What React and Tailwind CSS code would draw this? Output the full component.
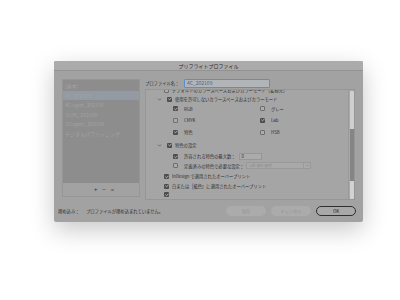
import { Check, ChevronDown } from 'lucide-react';

const FONT = { fontFamily: '"Noto Sans CJK JP", "Noto Sans", sans-serif' };

function Box({ on }) {
  return on ? (
    <span className="w-[5px] h-[5px] rounded-[1px] bg-[#4d4d4d] flex items-center justify-center shrink-0">
      <Check className="w-[4px] h-[4px] text-[#cfcfcf]" strokeWidth={5} />
    </span>
  ) : (
    <span className="w-[5px] h-[5px] rounded-[1px] border-[0.6px] border-[#6e6e6e] bg-[#acacac] shrink-0" />
  );
}

function Row({ h, indent, chevron, on, label, children }) {
  return (
    <div className={`flex items-center ${h}`}>
      <div className={`${indent} flex items-center gap-[3px]`}>
        {chevron && <ChevronDown className="w-[5px] h-[5px] text-[#4a4a4a] -ml-[7px] mr-[2px]" strokeWidth={3} />}
        <Box on={on} />
        <span className="text-[4.3px] text-[#2e2e2e] whitespace-nowrap">{label}</span>
      </div>
      {children}
    </div>
  );
}

function Pair({ h, a, b }) {
  return (
    <div className={`flex items-center ${h}`}>
      <div className="w-[110px] pl-[27px] flex items-center gap-[6px]">
        <Box on={a.on} />
        <span className="text-[4.3px] text-[#2e2e2e]">{a.label}</span>
      </div>
      <div className="pl-[4px] flex items-center gap-[6px]">
        <Box on={b.on} />
        <span className="text-[4.3px] text-[#2e2e2e]">{b.label}</span>
      </div>
    </div>
  );
}

const profiles = ['[基本]', '4C_202109', '4C+spot_202109', '1C(K)_202109', '1C(spot)_202109', 'デジタルパブリッシング'];

export default function App() {
  return (
    <div className="w-[400px] h-[300px] bg-white pt-[61px] pl-[54px]" style={FONT}>
      <div className="w-[309px] h-[161px] bg-[#a2a2a2] rounded-[2px] shadow-[0_8px_24px_rgba(0,0,0,0.22)] flex flex-col overflow-hidden">
        {/* title */}
        <div className="h-[10px] bg-[#ababab] border-b border-[#929292] flex items-center justify-center">
          <span className="text-[5px] text-[#2a2a2a]">プリフライトプロファイル</span>
        </div>

        <div className="flex pl-[8px] pt-[7px] gap-[5px]">
          {/* profile list */}
          <div className="w-[78px] h-[118px] mt-[1px] border border-[#969696] flex flex-col">
            <div className="h-[103px] bg-[#8d8d8d] pt-[1px] flex flex-col">
              {profiles.map((p, i) => (
                <div
                  key={p}
                  className={`h-[9.5px] pl-[2px] flex items-center text-[5px] text-[#a3a3a3] ${i === 1 ? 'bg-[#939aa3]' : ''}`}
                >
                  {p}
                </div>
              ))}
            </div>
            <div className="flex-1 flex items-center justify-center gap-[5px] pl-[6px] text-[6px] text-[#333] leading-none">
              <span>+</span>
              <span>−</span>
              <span className="text-[#555]">=</span>
            </div>
          </div>

          {/* right side */}
          <div className="w-[210px] flex flex-col">
            <div className="h-[10px] flex items-center">
              <span className="w-[39px] text-[4.3px] text-[#2e2e2e]">プロファイル名：</span>
              <div className="w-[86px] h-[9px] bg-[#b2b5b8] border border-[#5b8fc8] rounded-[1px] flex items-center pl-[2px] text-[5px] text-[#3d5f8c]">
                4C_202109
              </div>
            </div>

            <div className="mt-[1px] h-[111px] border border-[#969696] bg-[#a5a5a5] flex overflow-hidden">
              <div className="flex-1 flex flex-col -mt-[4px]">
                <Row h="h-[9px]" indent="pl-[18px]" on={false} label="デフォルトのカラースペースおよびカラーモード（変換先）" />
                <Row h="h-[10px]" indent="pl-[18px]" chevron on label="使用を許可しないカラースペースおよびカラーモード" />
                <Pair h="h-[11px]" a={{ on: true, label: 'RGB' }} b={{ on: false, label: 'グレー' }} />
                <Pair h="h-[13px]" a={{ on: false, label: 'CMYK' }} b={{ on: true, label: 'Lab' }} />
                <Pair h="h-[13px]" a={{ on: true, label: '特色' }} b={{ on: false, label: 'HSB' }} />
                <Row h="h-[15px]" indent="pl-[18px]" chevron on label="特色の設定" />
                <Row h="h-[9px]" indent="pl-[27px] gap-[6px]" on label="許容される特色の最大数：">
                  <div className="ml-[3px] w-[23px] h-[7px] bg-[#ababab] border border-[#969696] flex items-center pl-[2px] text-[4.3px] text-[#2e2e2e]">
                    0
                  </div>
                </Row>
                <Row h="h-[11px]" indent="pl-[27px] gap-[6px]" on={false} label="定義済みの特色で必要な設定：">
                  <div className="ml-[2px] w-[65px] h-[7px] bg-[#a9a9a9] border border-[#999] flex items-center">
                    <span className="flex-1 pl-[2px] text-[3.8px] text-[#8a8a8a]">Lab 値を使用</span>
                    <span className="w-[7px] h-full border-l border-[#999] flex items-center justify-center">
                      <ChevronDown className="w-[3px] h-[3px] text-[#777]" strokeWidth={4} />
                    </span>
                  </div>
                </Row>
                <Row h="h-[12px]" indent="pl-[18px]" on label="InDesign で適用されたオーバープリント" />
                <Row h="h-[9px]" indent="pl-[18px]" on label="白または［紙色］に適用されたオーバープリント" />
                <Row h="h-[9px]" indent="pl-[18px]" on label="" />
              </div>
              <div className="w-[6px] border-l border-[#9a9a9a] bg-[#a8a8a8] flex flex-col items-center pt-[1px]">
                <div className="w-[4px] h-[38px] bg-[#cfcfcf] rounded-t-[1px]" />
                <div className="w-[4px] h-[52px] bg-[#858585]" />
                <div className="w-[4px] h-[18px] bg-[#d2d2d2] rounded-b-[1px]" />
              </div>
            </div>
          </div>
        </div>

        {/* footer */}
        <div className="flex items-center pl-[4px] pr-[7px] mt-[5px] h-[12px]">
          <span className="w-[28px] text-[4.3px] text-[#2e2e2e]">埋め込み：</span>
          <span className="text-[4.3px] text-[#2e2e2e]">プロファイルが埋め込まれていません。</span>
          <div className="ml-auto flex gap-[5px]">
            <div className="w-[40px] h-[10px] rounded-full bg-[#ababab] flex items-center justify-center text-[4.3px] text-[#959595]">
              保存
            </div>
            <div className="w-[40px] h-[10px] rounded-full bg-[#ababab] flex items-center justify-center text-[4.3px] text-[#959595]">
              キャンセル
            </div>
            <div className="w-[40px] h-[10px] rounded-full bg-[#a8a8a8] border border-[#2f2f2f] flex items-center justify-center text-[4.5px] text-[#222]">
              OK
            </div>
          </div>
        </div>
      </div>
    </div>
  );
}
